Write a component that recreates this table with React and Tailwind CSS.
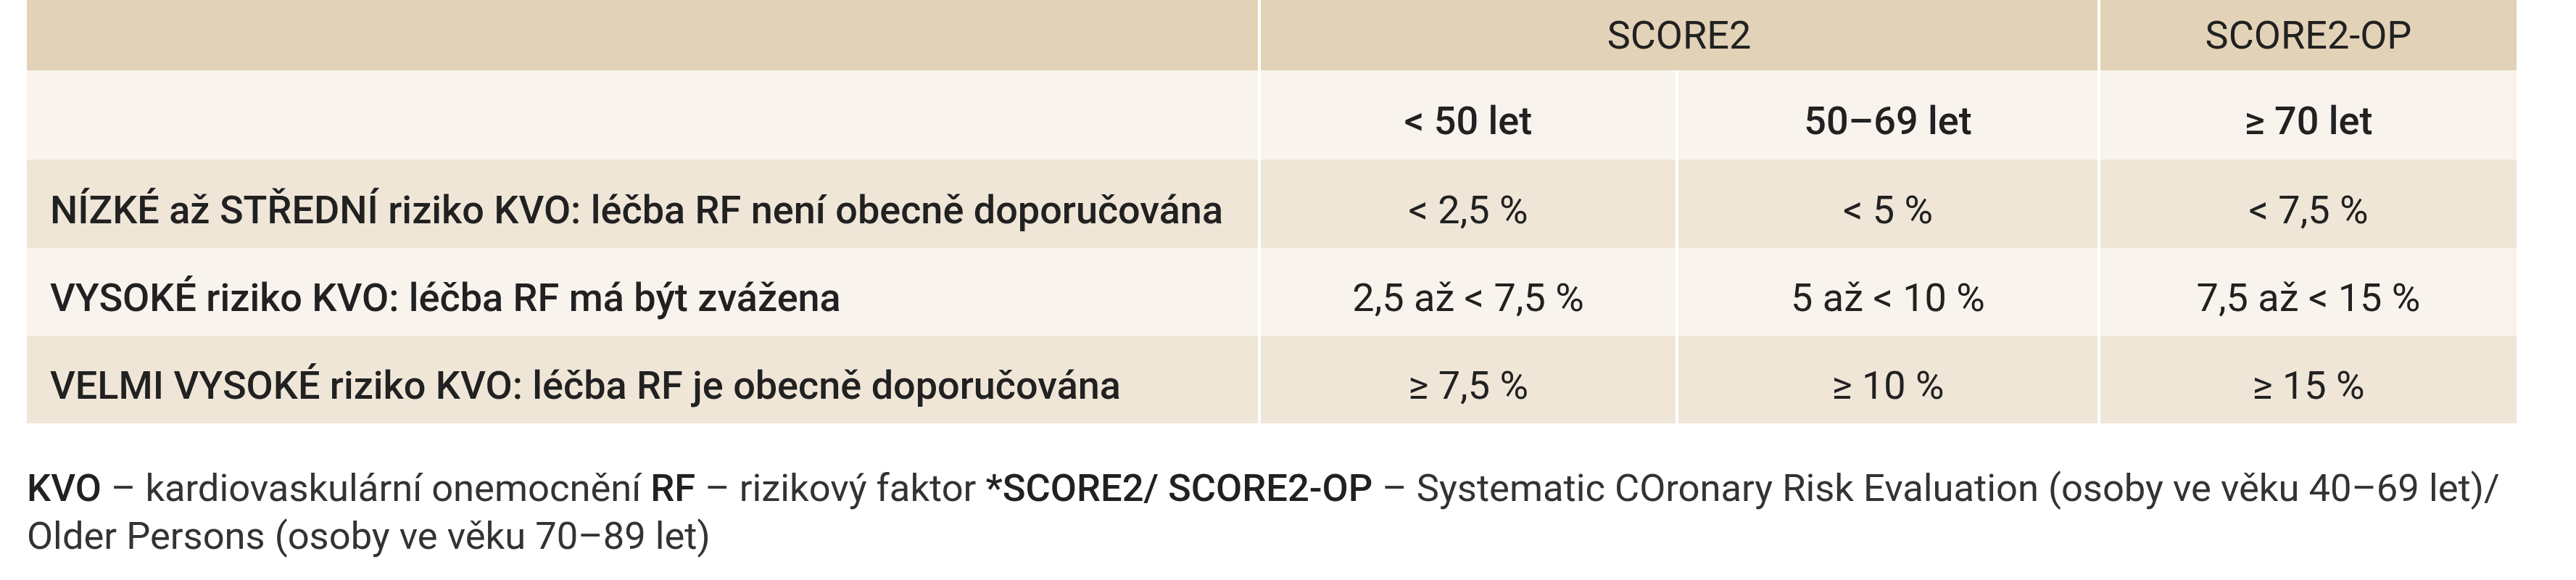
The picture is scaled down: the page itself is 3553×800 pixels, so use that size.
import React from 'react';

const rows = [
  {
    label: 'NÍZKÉ až STŘEDNÍ riziko KVO: léčba RF není obecně doporučována',
    values: ['< 2,5 %', '< 5 %', '< 7,5 %'],
    bg: 'bg-[#efe6d8]',
    h: 'h-[122px]',
  },
  {
    label: 'VYSOKÉ riziko KVO: léčba RF má být zvážena',
    values: ['2,5 až < 7,5 %', '5 až < 10 %', '7,5 až < 15 %'],
    bg: 'bg-[#f9f3ed]',
    h: 'h-[121px]',
  },
  {
    label: 'VELMI VYSOKÉ riziko KVO: léčba RF je obecně doporučována',
    values: ['≥ 7,5 %', '≥ 10 %', '≥ 15 %'],
    bg: 'bg-[#efe6d8]',
    h: 'h-[121px]',
  },
];

export default function App() {
  return (
    <div className="w-[3553px] h-[800px] bg-white text-[#212121] font-['Roboto','Liberation_Sans',sans-serif] pl-[37px]">
      <div className="grid grid-cols-[1698px_576px_582px_578px] w-[3434px] text-[54px]">
        {/* header */}
        <div className="h-[97px] bg-[#e2d2b7]" />
        <div className="col-span-2 h-[97px] bg-[#e2d2b7] border-l-4 border-white flex items-center justify-center">
          SCORE2
        </div>
        <div className="h-[97px] bg-[#e2d2b7] border-l-4 border-white flex items-center justify-center">
          SCORE2-OP
        </div>

        {/* age groups */}
        <div className="h-[123px] bg-[#f9f3ed]" />
        {['< 50 let', '50–69 let', '≥ 70 let'].map((a) => (
          <div key={a} className="h-[123px] bg-[#f9f3ed] border-l-4 border-white flex items-center justify-center pt-[16px] font-medium">
            {a}
          </div>
        ))}

        {rows.map((r) => (
          <React.Fragment key={r.label}>
            <div className={`${r.h} ${r.bg} flex items-center pl-[32px] pt-[16px] font-medium whitespace-nowrap`}>{r.label}</div>
            {r.values.map((v, i) => (
              <div key={i} className={`${r.h} ${r.bg} border-l-4 border-white flex items-center justify-center pt-[16px]`}>
                {v}
              </div>
            ))}
          </React.Fragment>
        ))}
      </div>

      <p className="mt-[56px] text-[52.5px] leading-[66px] text-[#333333] whitespace-nowrap">
        <span className="font-medium text-[#212121]">KVO</span> – kardiovaskulární onemocnění{' '}
        <span className="font-medium text-[#212121]">RF</span> – rizikový faktor{' '}
        <span className="font-medium text-[#212121]">*SCORE2/ SCORE2-OP</span> – Systematic COronary Risk Evaluation (osoby ve věku 40–69 let)/
        <br />
        Older Persons (osoby ve věku 70–89 let)
      </p>
    </div>
  );
}
